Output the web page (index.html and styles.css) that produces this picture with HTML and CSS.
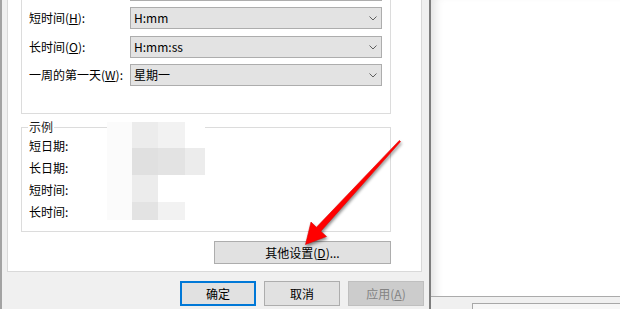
FILE: index.html
```html
<!DOCTYPE html>
<html lang="zh-CN">
<head>
  <meta charset="UTF-8" />
  <title>自定义格式</title>
  <link rel="stylesheet" href="styles.css">
</head>
<body>
  <div class="dialog">
    <div class="page">
      <div class="group group-time">
        <div class="combo combo-cut"></div>

        <div class="row first">
          <label>短时间(<u>H</u>):</label>
          <div class="combo"><span>H:mm</span><svg width="8" height="5" viewBox="0 0 8 5"><polyline points="0.5,0.5 4,4 7.5,0.5" /></svg></div>
        </div>
        <div class="row second">
          <label>长时间(<u>O</u>):</label>
          <div class="combo"><span>H:mm:ss</span><svg width="8" height="5" viewBox="0 0 8 5"><polyline points="0.5,0.5 4,4 7.5,0.5" /></svg></div>
        </div>
        <div class="row third">
          <label>一周的第一天(<u>W</u>):</label>
          <div class="combo"><span>星期一</span><svg width="8" height="5" viewBox="0 0 8 5"><polyline points="0.5,0.5 4,4 7.5,0.5" /></svg></div>
        </div>
      </div>

      <div class="group group-sample">
        <div class="legend">示例</div>
        <div class="sample">短日期:</div>
        <div class="sample">长日期:</div>
        <div class="sample">短时间:</div>
        <div class="sample">长时间:</div>

        <!-- pixelated values -->
        <div class="mosaic">
          <i class="c1"></i><i class="c3"></i><i class="c2"></i><i></i>
          <i class="c1"></i><i class="c5"></i><i class="c4"></i><i class="c3"></i>
          <i class="c1"></i><i class="c3"></i><i></i><i></i>
          <i class="c1"></i><i class="c4"></i><i class="c2"></i><i></i>
        </div>
      </div>

      <button class="btn btn-more">其他设置(<u>D</u>)...</button>
    </div>

    <div class="actions">
      <button class="btn btn-default">确定</button>
      <button class="btn">取消</button>
      <button class="btn" disabled>应用(<u>A</u>)</button>
    </div>
  </div>

  <div class="backdrop">
    <div class="backdrop-fill"></div>
    <div class="backdrop-bar"><div class="backdrop-box"></div></div>
  </div>

  <svg class="arrow" width="620" height="309" viewBox="0 0 620 309">
    <polygon points="400.6,141.6 320.8,231.3 326.5,236.5 305.5,244.5 311,222 316.4,227.3 399.4,140.4" />
  </svg>
</body>
</html>
```

FILE: styles.css
```css
* {
  box-sizing: border-box;
}

body {
  margin: 0;
  width: 620px;
  height: 309px;
  overflow: hidden;
  display: flex;
  position: relative;
  font-family: "Noto Sans CJK SC", "Noto Sans", sans-serif;
  font-size: 12px;
  color: #000;
  background: #fff;
}

/* Dialog */
.dialog {
  width: 431px;
  height: 309px;
  background: #f0f0f0;
  border-left: 2px solid #a3a3a3;
  border-right: 2px solid #7d7d7d;
}

.page {
  margin-left: 5px;
  width: 415px;
  background: #fff;
  border: 1px solid #d9d9d9;
  border-top: none;
  padding-bottom: 7px;
}

.group {
  margin-left: 13px;
  width: 370px;
  border: 1px solid #dcdcdc;
}

.group-time {
  border-top: none;
  padding: 0 7px 27px 7px;
}

.combo {
  width: 252px;
  height: 22px;
  border: 1px solid #adadad;
  background: #e3e3e3;
  display: flex;
  align-items: center;
  justify-content: space-between;
  padding: 0 4px 0 3px;
  line-height: 20px;
}

.combo svg polyline {
  fill: none;
  stroke: #5f5f5f;
  stroke-width: 1;
}

.combo-cut {
  height: 1px;
  margin-left: 101px;
  border-top: none;
  border-bottom: none;
  background: #adadad;
  padding: 0;
}

.row {
  display: flex;
  align-items: center;
  height: 22px;
}
.row.first { margin-top: 6px; }
.row.second { margin-top: 7px; }
.row.third { margin-top: 6px; }

.row label {
  width: 101px;
  line-height: 22px;
}

.group-sample {
  margin-top: 13px;
  padding: 0 0 8px 7px;
  position: relative;
}

.legend {
  width: fit-content;
  margin: -9px 0 0 -1px;
  padding: 0 1px;
  line-height: 16px;
  background: #fff;
  color: #1a1a1a;
  white-space: nowrap;
}

.sample {
  line-height: 22px;
}

.mosaic {
  position: absolute;
  left: 85px;
  top: -6px;
  display: grid;
  grid-template-columns: 25px 26px 27px 20px;
  grid-template-rows: 26px 27px 27px 18px;
}
.mosaic i { background: #fff; }
.mosaic .c1 { background: #fbfbfb; }
.mosaic .c2 { background: #f2f2f2; }
.mosaic .c3 { background: #ececec; }
.mosaic .c4 { background: #e3e3e3; }
.mosaic .c5 { background: #e0e0e0; }

/* Buttons */
.btn {
  font-family: inherit;
  font-size: 12px;
  color: #000;
  background: #e1e1e1;
  border: 1px solid #adadad;
  padding: 0;
  height: 25px;
  width: 76px;
}
.btn:disabled {
  background: #cccccc;
  border-color: #bfbfbf;
  color: #838383;
}
.btn-default {
  border: 2px solid #0078d7;
}

.btn-more {
  display: block;
  margin: 9px 0 0 206px;
  width: 177px;
  height: 23px;
}

.actions {
  display: flex;
  justify-content: flex-end;
  gap: 8px;
  margin-top: 9px;
  padding-right: 5px;
}

/* Window behind */
.backdrop {
  flex: 1;
  display: flex;
  flex-direction: column;
  box-shadow: inset 10px 0 10px -6px rgba(0, 0, 0, 0.12);
}
.backdrop-fill { flex: 1; }
.backdrop-bar {
  height: 13px;
  border-top: 1px solid #ababab;
  background: #f0f0f0;
  padding: 6px 0 0 41px;
}
.backdrop-box {
  height: 100%;
  border-top: 1px solid #a8a8a8;
  border-left: 1px solid #a8a8a8;
  background: #f7f7f7;
}

/* Annotation arrow */
.arrow {
  position: absolute;
  left: 0;
  top: 0;
  pointer-events: none;
  filter: drop-shadow(1px 2px 1.5px rgba(0, 0, 0, 0.45));
}
.arrow polygon {
  fill: #ff0000;
  stroke: #e00000;
  stroke-width: 0.6;
  stroke-linejoin: round;
}
```
